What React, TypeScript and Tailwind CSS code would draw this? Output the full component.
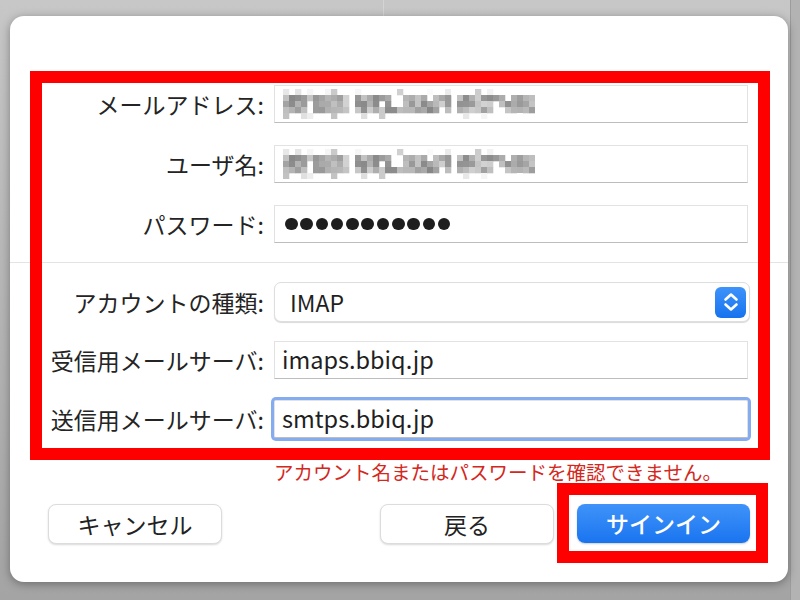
import React from 'react';

const jp = "font-['Hiragino_Sans','Noto_Sans_CJK_JP','Noto_Sans',sans-serif]";

const rnd = (i: number, j: number) => {
  const v = Math.sin(i * 12.9898 + j * 78.233) * 43758.5453;
  return v - Math.floor(v);
};

// pixelated (blurred) e-mail address
const Mosaic: React.FC = () => {
  const cols = 42;
  const rows = 5;
  const s = 6;
  const cells: React.ReactNode[] = [];
  const gaps = [4, 11, 19, 27, 28, 35];
  for (let i = 0; i < cols; i++) {
    for (let j = 0; j < rows; j++) {
      const h = rnd(i, j);
      const fill = j === 0 ? 0.4 : j === 4 ? 0.25 : gaps.includes(i) ? 0.45 : 0.92;
      if (h > fill) continue;
      const base = j === 0 || j === 4 ? 190 : 135;
      const g = Math.round(base + rnd(j + 3, i + 7) * 75);
      cells.push(
        <rect key={`${i}-${j}`} x={i * s} y={j * s} width={s + 0.3} height={s + 0.3} fill={`rgb(${g},${g},${g})`} />
      );
    }
  }
  return (
    <svg width={cols * s} height={rows * s} className="block">
      {cells}
    </svg>
  );
};

const Label: React.FC<{ text: string }> = ({ text }) => (
  <div className={`w-[254px] text-right text-[23px] leading-none text-[#242424] ${jp}`}>{text}</div>
);

const fieldCls =
  'ml-[10px] w-[474px] h-[38px] bg-white border border-[#e2e2e2] border-b-[#bdbdbd] flex items-center';

export default function App() {
  return (
    <div className="relative w-[800px] h-[600px] overflow-hidden bg-linear-to-b from-[#c7c7c7] to-[#a4a4a4] pt-[16px] pl-[10px]">
      <div className="absolute left-[383px] top-0 w-px h-[16px] bg-[#d4d4d4]" />
      <div className="absolute left-[790px] top-0 w-[10px] h-[600px] bg-[#b3b3b3] border-l border-[#9c9c9c]" />

      <div className="relative w-[778px] h-[566px] rounded-[14px] bg-white shadow-[0_2px_10px_rgba(0,0,0,0.35)] pt-[69px]">
        <div className="flex items-center h-[38px]">
          <Label text="メールアドレス:" />
          <div className={`${fieldCls} pl-[8px]`}>
            <Mosaic />
          </div>
        </div>
        <div className="flex items-center h-[38px] mt-[22px]">
          <Label text="ユーザ名:" />
          <div className={`${fieldCls} pl-[8px]`}>
            <Mosaic />
          </div>
        </div>
        <div className="flex items-center h-[38px] mt-[22px]">
          <Label text="パスワード:" />
          <div className={`${fieldCls} pl-[10px] gap-[2.8px]`}>
            {Array.from({ length: 11 }).map((_, i) => (
              <span key={i} className="w-[12.5px] h-[12.5px] rounded-full bg-[#1e1e1e]" />
            ))}
          </div>
        </div>

        <div className="mt-[19px] h-px bg-[#e4e4e4]" />

        <div className="flex items-center h-[40px] mt-[19px]">
          <Label text="アカウントの種類:" />
          <div className="ml-[10px] w-[476px] h-[40px] rounded-[7px] bg-white border border-[#dedede] shadow-[0_1px_1px_rgba(0,0,0,0.15)] flex items-center justify-between pl-[15px] pr-[3px]">
            <span className={`text-[23px] text-[#1f1f1f] ${jp}`}>IMAP</span>
            <div className="w-[31px] h-[31px] rounded-[6px] bg-linear-to-b from-[#3d93fa] to-[#1673ee] flex items-center justify-center">
              <svg width="16" height="22" viewBox="0 0 16 22" fill="none" stroke="white" strokeWidth="2.6" strokeLinecap="round" strokeLinejoin="round">
                <path d="M2.5 8.5 L8 3.5 L13.5 8.5" />
                <path d="M2.5 13.5 L8 18.5 L13.5 13.5" />
              </svg>
            </div>
          </div>
        </div>

        <div className="flex items-center h-[38px] mt-[19px]">
          <Label text="受信用メールサーバ:" />
          <div className={`${fieldCls} pl-[7px]`}>
            <span className={`text-[23.5px] text-[#1f1f1f] ${jp}`}>imaps.bbiq.jp</span>
          </div>
        </div>
        <div className="flex items-center h-[38px] mt-[21px]">
          <Label text="送信用メールサーバ:" />
          <div className={`${fieldCls} pl-[7px] rounded-[2px] border-[#9bb9ee] shadow-[0_0_0_3px_#86acf0]`}>
            <span className={`text-[23.5px] text-[#1f1f1f] ${jp}`}>smtps.bbiq.jp</span>
          </div>
        </div>

        <div className={`mt-[22px] h-[24px] leading-[24px] pl-[264px] text-[19.5px] text-[#d3281d] ${jp}`}>
          アカウント名またはパスワードを確認できません。
        </div>

        <div className="flex mt-[20px]">
          <button className={`ml-[38px] w-[174px] h-[40px] rounded-[8px] bg-white border border-[#dcdcdc] shadow-[0_1px_2px_rgba(0,0,0,0.15)] text-[23px] text-[#222] ${jp}`}>
            キャンセル
          </button>
          <button className={`ml-[158px] w-[174px] h-[40px] rounded-[8px] bg-white border border-[#dcdcdc] shadow-[0_1px_2px_rgba(0,0,0,0.15)] text-[23px] text-[#222] ${jp}`}>
            戻る
          </button>
          <button className={`ml-[23px] w-[173px] h-[39px] rounded-[8px] bg-linear-to-b from-[#3f93f9] to-[#1874ef] shadow-[0_1px_2px_rgba(0,0,0,0.2)] text-[23px] font-medium text-white ${jp}`}>
            サインイン
          </button>
        </div>

        {/* annotation frames */}
        <div className="absolute left-[20px] top-[55px] w-[740px] h-[389px] border-[12px] border-[#ff0000]" />
        <div className="absolute left-[547px] top-[467px] w-[211px] h-[80px] border-[12px] border-[#ff0000]" />
      </div>
    </div>
  );
}
